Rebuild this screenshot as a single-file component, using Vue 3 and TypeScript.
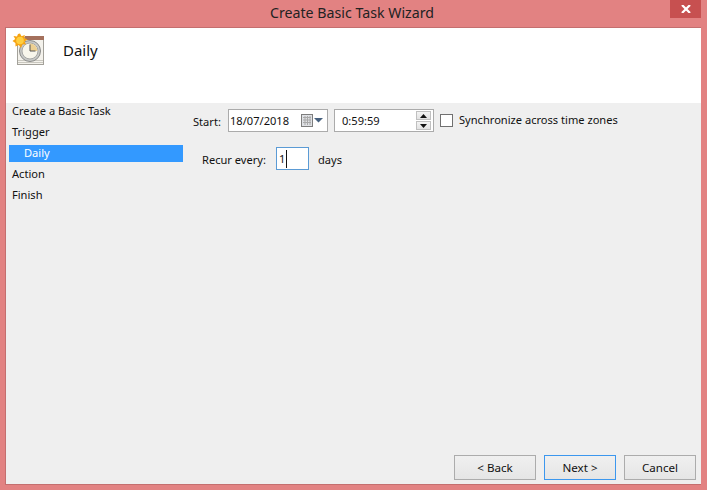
<script setup lang="ts">
const steps = [
  { label: 'Create a Basic Task', active: false },
  { label: 'Trigger', active: false },
  { label: 'Daily', active: true },
  { label: 'Action', active: false },
  { label: 'Finish', active: false },
]
</script>

<template>
  <div class="window">
    <div class="titlebar">
      <span class="title">Create Basic Task Wizard</span>
      <button class="close" aria-label="Close">
        <svg width="10" height="8" viewBox="0 0 10 8">
          <path d="M1 0 L9 8 M9 0 L1 8" stroke="#fff" stroke-width="2.2" fill="none" />
        </svg>
      </button>
    </div>
    <div class="client">
      <header class="head">
        <svg class="task-icon" width="34" height="34" viewBox="0 0 34 34">
          <rect x="5.5" y="4.5" width="26" height="27" fill="#f4f2ec" stroke="#a3a19a" />
          <rect x="13" y="3" width="19" height="4" fill="#a4705c" />
          <path d="M6 27.5 H31 M6 29.5 H31" stroke="#c9c7bf" fill="none" />
          <circle cx="18" cy="18" r="10.5" fill="#c8c9c7" stroke="#8b8c8a" />
          <circle cx="18" cy="18" r="8" fill="#f8f6ec" stroke="#a7a8a6" />
          <path d="M18 18 L18 10.5 A7.5 7.5 0 0 1 25.5 18 Z" fill="#edd092" />
          <path d="M18 11.5 V18 H23.5" stroke="#555" fill="none" />
          <path d="M8 0.5 L9.5 3.2 L12.8 2 L12.4 5 L15.5 6.5 L12.6 8.5 L14 11.5 L10.6 11.2 L9 15 L6.8 12 L3.5 13.5 L3.4 10 L0.5 8 L3.2 6 L1.5 3 L5 3.5 L6 1 Z" fill="#f6a312" />
          <circle cx="8" cy="7.5" r="3.8" fill="#ffcf3f" />
        </svg>
        <h1 class="heading">Daily</h1>
      </header>
      <div class="body">
        <nav class="steps">
          <div v-for="s in steps" :key="s.label" class="step" :class="{ active: s.active }">{{ s.label }}</div>
        </nav>
        <main class="pane">
          <div class="form">
            <div class="row-start">
              <span class="lbl-start">Start:</span>
              <div class="field date">
                <span>18/07/2018</span>
                <svg class="cal" width="22" height="13" viewBox="0 0 22 13">
                  <rect x="0.5" y="0.5" width="11" height="12" fill="#dfe1e5" stroke="#7d7d7d" />
                  <path d="M2 3.5 H10 M2 6 H10 M2 8.5 H10 M4 2 V11 M6.5 2 V11 M9 2 V11" stroke="#a9a9a9" fill="none" />
                  <path d="M13 4 H22 L17.5 8.5 Z" fill="#47617f" />
                </svg>
              </div>
              <div class="field time">
                <span>0:59:59</span>
                <div class="spin">
                  <div class="spin-btn"><svg width="7" height="4" viewBox="0 0 7 4"><path d="M3.5 0 L7 4 H0 Z" fill="#111" /></svg></div>
                  <div class="spin-btn"><svg width="7" height="4" viewBox="0 0 7 4"><path d="M0 0 H7 L3.5 4 Z" fill="#111" /></svg></div>
                </div>
              </div>
              <span class="check"></span>
              <span class="check-lbl">Synchronize across time zones</span>
            </div>
            <div class="row-recur">
              <span class="lbl-recur">Recur every:</span>
              <div class="num"><span>1</span><i class="caret"></i></div>
              <span class="days">days</span>
            </div>
          </div>
        </main>
      </div>
      <footer class="foot">
        <button class="btn back">&lt; Back</button>
        <button class="btn next">Next &gt;</button>
        <button class="btn cancel">Cancel</button>
      </footer>
    </div>
  </div>
</template>

<style>
html, body { margin: 0; padding: 0; overflow: hidden; }
</style>

<style scoped>
.window {
  width: 707px;
  height: 490px;
  box-sizing: border-box;
  background: #e28282;
  padding: 0 6px 5px 5px;
  display: flex;
  flex-direction: column;
  font-family: "Noto Sans", sans-serif;
  font-size: 11.1px;
  color: #111;
  position: relative;
}
.titlebar {
  height: 27px;
  flex: none;
  display: flex;
  justify-content: center;
  align-items: center;
}
.title {
  font-size: 14.2px;
  color: #222;
  position: relative;
  top: -1px;
  left: -1px;
}
.close {
  position: absolute;
  top: 0;
  right: 6px;
  width: 31px;
  height: 18px;
  padding: 0;
  border: 0;
  background: #c75050;
  display: flex;
  align-items: center;
  justify-content: center;
}
.client {
  flex: 1;
  border: 1px solid #c46f6f;
  border-right: 0;
  background: #efefef;
  display: flex;
  flex-direction: column;
  min-height: 0;
}
.head {
  height: 75px;
  flex: none;
  background: #fff;
  display: flex;
  align-items: flex-start;
  box-sizing: border-box;
  padding: 5px 0 0 6px;
}
.task-icon { flex: none; }
.heading {
  margin: 7px 0 0 17px;
  font-size: 15px;
  font-weight: 400;
  color: #111;
}
.body {
  flex: 1;
  display: flex;
  min-height: 0;
}
.steps {
  width: 174px;
  flex: none;
  margin-left: 3px;
  display: flex;
  flex-direction: column;
  gap: 4px;
}
.step {
  height: 17px;
  line-height: 16px;
  padding-left: 3px;
  white-space: nowrap;
}
.step.active {
  background: #3399ff;
  color: #fff;
  padding-left: 15px;
}
.pane { flex: 1; padding: 6px 0 0 10px; }
.form { display: flex; flex-direction: column; gap: 15px; }
.row-start, .row-recur { display: flex; align-items: center; height: 23px; }
.lbl-start { width: 35px; flex: none; position: relative; top: 1px; }
.field {
  box-sizing: border-box;
  width: 100px;
  height: 23px;
  flex: none;
  background: #fff;
  border: 1px solid #ababab;
  display: flex;
  align-items: center;
  white-space: nowrap;
}
.date { padding-left: 1px; justify-content: space-between; padding-right: 4px; }
.cal { flex: none; }
.time { margin-left: 6px; padding-left: 7px; justify-content: space-between; padding-right: 2px; }
.spin { display: flex; flex-direction: column; gap: 1px; }
.spin-btn {
  box-sizing: border-box;
  width: 15px;
  height: 9px;
  background: linear-gradient(#f4f4f4, #e2e2e2);
  border: 1px solid #c0c0c0;
  display: flex;
  align-items: center;
  justify-content: center;
}
.check {
  box-sizing: border-box;
  width: 13px;
  height: 13px;
  margin-left: 6px;
  background: #fff;
  border: 1px solid #707070;
  flex: none;
}
.check-lbl { margin-left: 6px; white-space: nowrap; position: relative; top: -1px; }
.lbl-recur { margin-left: 9px; width: 74px; flex: none; position: relative; top: 1px; }
.num {
  box-sizing: border-box;
  width: 33px;
  height: 23px;
  background: #fff;
  border: 1px solid #5b9bd5;
  display: flex;
  align-items: center;
  padding-left: 2px;
}
.caret { width: 1px; height: 18px; background: #111; margin-left: 1px; }
.days { margin-left: 10px; position: relative; top: 1px; left: -1px; }
.foot {
  flex: none;
  height: 29px;
  display: flex;
  align-items: flex-start;
  gap: 8px;
  justify-content: flex-end;
  padding-right: 5px;
}
.btn {
  box-sizing: border-box;
  width: 72px;
  height: 25px;
  padding: 0;
  font: inherit;
  font-size: 11.6px;
  color: #111;
  border: 1px solid #acacac;
  background: linear-gradient(#f0f0f0, #e5e5e5);
}
.back { width: 82px; }
.next { border-color: #3c97ee; }
</style>
